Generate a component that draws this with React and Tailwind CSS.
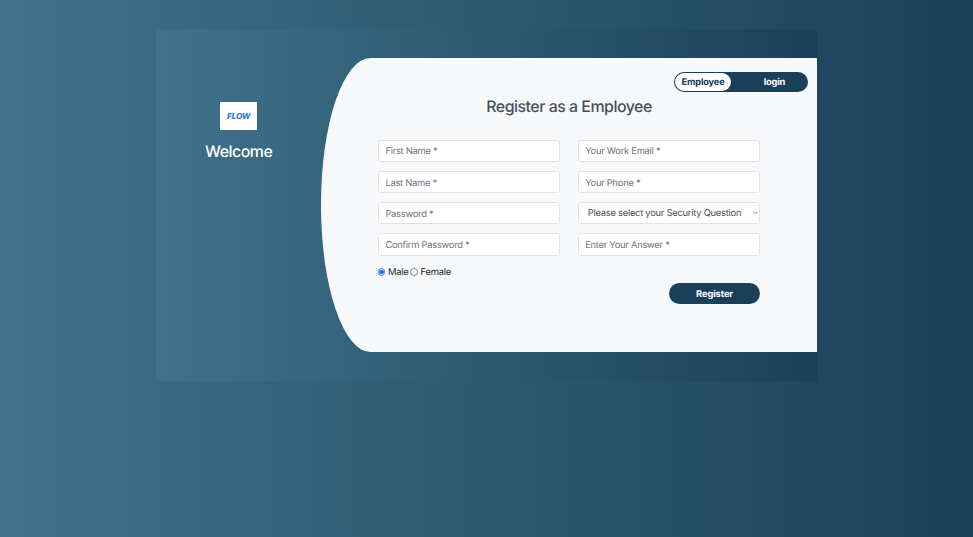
import React from "react";

function Field({ placeholder }) {
  return (
    <input
      placeholder={placeholder}
      className="block h-[22.3px] w-full rounded-[2.5px] border border-[#dfe3e7] bg-white px-[6.5px] pt-[2px] text-[9.4px] tracking-[-0.27px] text-[#495057] outline-none [text-rendering:geometricPrecision] placeholder:text-[#6c757d] placeholder:opacity-100"
    />
  );
}

function Radio({ label, checked }) {
  return (
    <label className="flex items-center gap-[2.5px]">
      <span
        className={
          checked
            ? "flex size-[7.6px] items-center justify-center rounded-full border border-[#2f7bf6] bg-white"
            : "flex size-[7.6px] items-center justify-center rounded-full border border-[#858585] bg-white"
        }
      >
        {checked && <span className="size-[4.5px] rounded-full bg-[#1a6ff5]" />}
      </span>
      <span className="pt-[1.4px]">{label}</span>
    </label>
  );
}

export default function App() {
  return (
    <div className="h-[537px] w-[973px] overflow-hidden bg-[linear-gradient(to_right,#40728a,#26536a_64%,#1a4059)] pt-[29px] pl-[156px] font-['Inter',sans-serif] leading-none [text-rendering:geometricPrecision]">
      <div className="flex h-[352px] w-[660.6px] bg-[linear-gradient(to_right,#40728a,#26536a_64%,#1a4059)] py-[29.2px]">
        <aside className="flex w-[165.4px] shrink-0 flex-col items-center pt-[43.8px] text-white">
          <div className="flex h-[27.6px] w-[37px] items-center justify-center bg-white">
            <span className="text-[8.2px] font-extrabold italic tracking-[-0.1px] text-[#347fc2]">FLOW</span>
          </div>
          <h3 className="mt-[13.4px] text-[15.9px] font-medium leading-[18px] tracking-[-0.48px]">Welcome</h3>
        </aside>
        <main className="h-[293.6px] flex-1 rounded-tl-[10%_50%] rounded-bl-[10%_50%] bg-[#f8f9fb]">
          <nav className="flex h-[33.8px] justify-end pt-[14.1px] pr-[8.6px]">
            <div className="flex h-[19.6px] w-[134px] shrink-0 rounded-full bg-[#1a4059] p-px text-[9.3px] font-bold tracking-[-0.2px]">
              <span className="flex w-[56px] shrink-0 items-center justify-center rounded-full bg-white pt-[1.6px] text-[#1a4059]">Employee</span>
              <span className="flex w-[87px] shrink-0 items-center justify-center pt-[1px] text-white">login</span>
            </div>
          </nav>
          <h3 className="mt-[6.5px] h-[18px] text-center text-[15.9px] font-medium leading-[18px] tracking-[-0.48px] text-[#495057]">Register as a Employee</h3>
          <form className="mt-[23.2px] grid grid-cols-[182.6px_182.6px] gap-x-[17.2px] pl-[56.5px]">
            <div className="flex flex-col gap-[8.95px]">
              <Field placeholder="First Name *" />
              <Field placeholder="Last Name *" />
              <Field placeholder="Password *" />
              <Field placeholder="Confirm Password *" />
              <div className="mt-[1.6px] flex gap-[2px] text-[9.4px] leading-[10px] tracking-[-0.25px] text-[#212529]">
                <Radio label="Male" checked />
                <Radio label="Female" />
              </div>
            </div>
            <div className="flex flex-col gap-[8.95px]">
              <Field placeholder="Your Work Email *" />
              <Field placeholder="Your Phone *" />
              <div className="relative">
                <select className="block h-[22.3px] w-full appearance-none rounded-[2.5px] border border-[#dfe3e7] bg-white pt-[2.2px] pl-[9px] text-[9.4px] leading-[16px] tracking-[-0.26px] text-[#495057] outline-none [text-rendering:geometricPrecision]">
                  <option>Please select your Security Question</option>
                </select>
                <svg viewBox="0 0 5 4" className="absolute top-[9.2px] right-[2.4px] h-[4px] w-[5px]" fill="none" stroke="#555" strokeWidth="0.7">
                  <path d="M0.4 0.8 2.5 2.9 4.6 0.8" />
                </svg>
              </div>
              <Field placeholder="Enter Your Answer *" />
              <button type="button" className="mt-[18.3px] h-[21px] w-[91.4px] self-end rounded-full bg-[#1a4059] pt-[2.4px] text-[9.3px] font-bold tracking-[-0.1px] text-white [text-rendering:geometricPrecision]">Register</button>
            </div>
          </form>
        </main>
      </div>
    </div>
  );
}
